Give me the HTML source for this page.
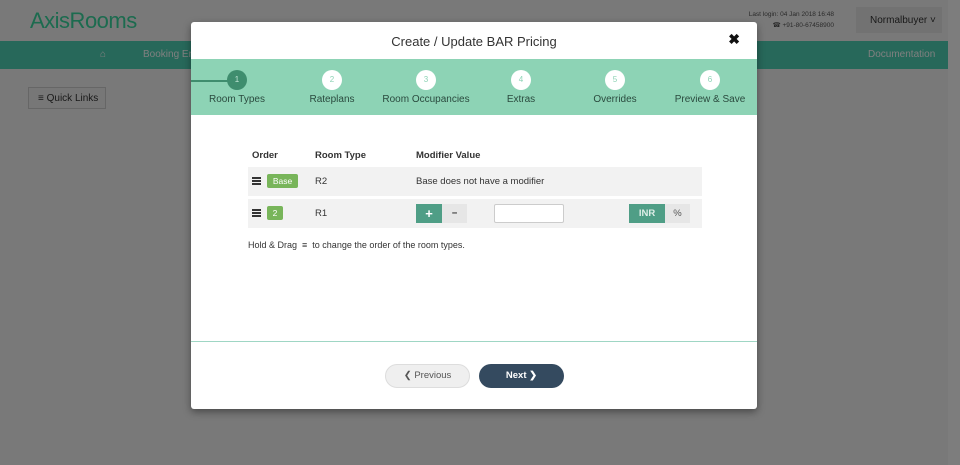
<!DOCTYPE html>
<html><head><style>
*{margin:0;padding:0;box-sizing:border-box}
html,body{background:#f3f3f3}
body{width:960px;height:465px;overflow:hidden;font-family:"Liberation Sans",sans-serif;position:relative}
.logo{position:absolute;left:30px;top:8px;font-size:22px;color:#38d69e;letter-spacing:-0.5px}
.nav{position:absolute;left:0;top:41px;width:948px;height:28px;background:#4ed0b4}
.nav span{position:absolute;top:8px;font-size:10px;color:#fff}
.ql{position:absolute;left:28px;top:87px;width:78px;height:22px;border:1px solid #ccc;background:#eee;font-size:10px;color:#333;padding:5px 0 0 9px}
.login{position:absolute;left:730px;top:9px;font-size:6.5px;color:#555;text-align:right;width:104px;line-height:11px}
.nb{position:absolute;left:856px;top:7px;width:86px;height:26px;background:#e5e5e5;font-size:10px;color:#333;padding:8px 0 0 14px}
.sb{position:absolute;left:948px;top:0;width:12px;height:465px;background:#fafafa}
.ov{position:absolute;left:0;top:0;width:960px;height:465px;background:rgba(0,0,0,0.5)}
.modal{position:absolute;left:191px;top:22px;width:566px;height:387px;background:#fff;border-radius:3px;box-shadow:0 3px 8px rgba(0,0,0,.4)}
.title{position:absolute;top:12px;width:100%;text-align:center;font-size:13px;color:#333}
.x{position:absolute;right:17px;top:9px;font-size:14px;font-weight:bold;color:#111}
.steps{position:absolute;top:37px;left:0;width:566px;height:56px;background:#8dd3b5}
.line{position:absolute;left:0;top:21px;width:46px;height:2px;background:#3f8d6e}
.st{position:absolute;top:11px;width:100px;text-align:center;margin-left:-50px}
.c{width:20px;height:20px;border-radius:50%;background:#fff;margin:0 auto;font-size:8px;color:#8dd3b5;line-height:20px}
.st.a .c{background:#3f8d6e;color:#bfe5d5}
.st p{font-size:10px;color:#2a4a3e;margin-top:4px}
.tbl{position:absolute;left:57px;top:124px;width:454px;font-size:9.5px;color:#333}
.h{position:absolute;top:4px;font-weight:bold}
.row{position:absolute;left:0;width:454px;height:29px;background:#f2f2f2}
.ham{position:absolute;left:4px;top:10px;width:9px;height:8px;border-top:2px solid #333;border-bottom:2px solid #333}
.ham:after{content:"";position:absolute;left:0;top:1px;width:9px;height:2px;background:#333}
.badge{position:absolute;top:7px;height:14px;background:#78b55a;color:#fff;border-radius:2px;font-size:8.5px;text-align:center;line-height:14px}
.t{position:absolute;top:9px}
.btn{position:absolute;top:5px;height:19px;line-height:19px;text-align:center;font-weight:bold}
.foot{position:absolute;left:0;top:319px;width:566px;height:1px;background:#9fd6c4}
.prev{position:absolute;left:194px;top:342px;width:85px;height:24px;border-radius:12px;background:#efefef;border:1px solid #ddd;font-size:9.5px;color:#555;text-align:center;line-height:22px}
.next{position:absolute;left:288px;top:342px;width:85px;height:24px;border-radius:12px;background:#344a5f;font-size:9.5px;color:#fff;text-align:center;line-height:24px;font-weight:bold}
</style></head><body>
<div class="logo">AxisRooms</div>
<div class="login">Last login: 04 Jan 2018 16:48<br>&#9742; +91-80-67458900</div>
<div class="nb">Normalbuyer ˅</div>
<div class="nav"><span style="left:100px">&#8962;</span><span style="left:143px">Booking En</span><span style="left:868px">Documentation</span></div>
<div class="ql">&#8801; Quick Links</div>
<div class="sb"></div>
<div class="ov"></div>
<div class="modal">
<div class="title">Create / Update BAR Pricing</div>
<div class="x">&#10006;</div>
<div class="steps"><div class="line"></div>
<div class="st a" style="left:46px"><div class="c">1</div><p>Room Types</p></div>
<div class="st" style="left:141px"><div class="c">2</div><p>Rateplans</p></div>
<div class="st" style="left:235px"><div class="c">3</div><p>Room Occupancies</p></div>
<div class="st" style="left:330px"><div class="c">4</div><p>Extras</p></div>
<div class="st" style="left:424px"><div class="c">5</div><p>Overrides</p></div>
<div class="st" style="left:519px"><div class="c">6</div><p>Preview &amp; Save</p></div>
</div>
<div class="tbl">
<div class="h" style="left:4px">Order</div><div class="h" style="left:67px">Room Type</div><div class="h" style="left:168px">Modifier Value</div>
<div class="row" style="top:21px"><div class="ham"></div><div class="badge" style="left:19px;width:31px">Base</div><div class="t" style="left:67px">R2</div><div class="t" style="left:168px">Base does not have a modifier</div></div>
<div class="row" style="top:53px"><div class="ham"></div><div class="badge" style="left:19px;width:16px">2</div><div class="t" style="left:67px">R1</div>
<div class="btn" style="left:168px;width:26px;background:#4f9e86;color:#fff;font-size:13px">+</div><div class="btn" style="left:194px;width:25px;background:#e6e6e6;color:#333">&minus;</div>
<div style="position:absolute;left:246px;top:5px;width:70px;height:19px;background:#fff;border:1px solid #ccc;border-radius:2px"></div>
<div class="btn" style="left:381px;width:36px;background:#4f9e86;color:#dfeee8">INR</div><div class="btn" style="left:417px;width:25px;background:#e6e6e6;color:#555;font-weight:normal">%</div></div>
<div style="position:absolute;left:0;top:94px;font-size:9px">Hold &amp; Drag &nbsp;<b>&#8801;</b>&nbsp; to change the order of the room types.</div>
</div>
<div class="foot"></div>
<div class="prev">&#10094; Previous</div>
<div class="next">Next &#10095;</div>
</div>
</body></html>
